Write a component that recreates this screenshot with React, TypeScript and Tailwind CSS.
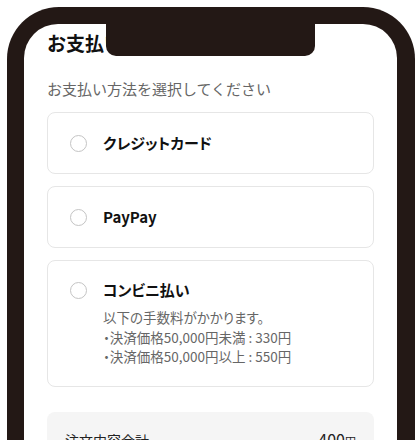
import React from 'react';

const jp = "font-['Noto_Sans_CJK_JP','Noto_Sans',sans-serif]";

interface OptionProps {
  label: string;
  children?: React.ReactNode;
}

const Radio: React.FC = () => (
  <span className="block w-[17px] h-[17px] shrink-0 rounded-full border-[1.75px] border-[#c4c4c4] bg-white" />
);

const PaymentOption: React.FC<OptionProps> = ({ label, children }) => {
  if (!children) {
    return (
      <div className="flex items-center h-[62px] rounded-[8px] border border-[#e6e6e6] pl-[22px]">
        <Radio />
        <span className="ml-[16px] text-[15px] leading-[22px] font-bold text-[#111] [font-feature-settings:'palt']">
          {label}
        </span>
      </div>
    );
  }
  return (
    <div className="flex items-start rounded-[8px] border border-[#e6e6e6] pl-[22px] pt-[18px] pb-[19px]">
      <div className="h-[22px] flex items-center">
        <Radio />
      </div>
      <div className="ml-[16px]">
        <div className="text-[15px] leading-[22px] font-bold text-[#111] [font-feature-settings:'palt']">{label}</div>
        <div className="mt-[7px]">{children}</div>
      </div>
    </div>
  );
};

export default function App() {
  return (
    <div className={`w-[420px] h-[440px] overflow-hidden bg-white pt-[7px] pl-[7px] ${jp}`}>
      <div className="relative w-[408px] h-[500px] bg-[#231815] rounded-t-[52px] pl-[17px] pr-[18px] pt-[17px]">
        {/* notch */}
        <div className="absolute left-[99px] top-0 w-[209px] h-[49px] bg-[#231815] rounded-b-[10px]" />

        <div className="h-full bg-white rounded-t-[34px] px-[23px] pt-[5px]">
          <div className="text-[19px] leading-[27px] font-bold text-[#111] whitespace-nowrap">お支払い方法</div>
          <p className="mt-[22px] text-[15px] leading-[22px] text-[#666]">お支払い方法を選択してください</p>

          <div className="mt-[12px] flex flex-col gap-[12px]">
            <PaymentOption label="クレジットカード" />
            <PaymentOption label="PayPay" />
            <PaymentOption label="コンビニ払い">
              <div className="text-[13.5px] leading-[19.5px] text-[#666] [font-feature-settings:'palt']">
                <p>以下の手数料がかかります。</p>
                <p>・決済価格50,000円未満 : 330円</p>
                <p>・決済価格50,000円以上 : 550円</p>
              </div>
            </PaymentOption>
          </div>

          <div className="mt-[25px] rounded-[8px] bg-[#f5f5f5] px-[18px] pt-[17px] pb-[20px]">
            <div className="flex items-baseline justify-between text-[14px] leading-[20px] text-[#222]">
              <span>注文内容合計</span>
              <span className="text-[16px]">
                400<span className="text-[11px]">円</span>
              </span>
            </div>
          </div>
        </div>
      </div>
    </div>
  );
}
